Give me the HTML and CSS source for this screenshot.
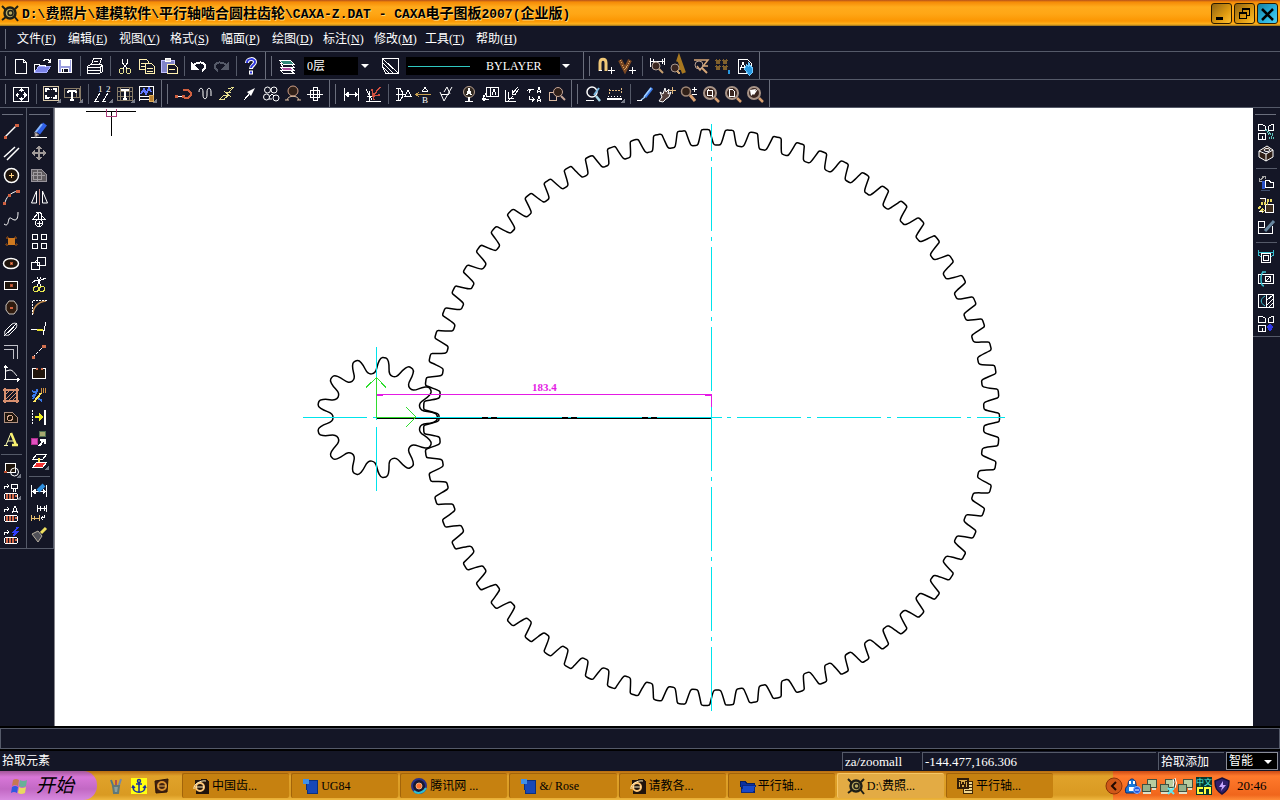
FILE: index.html
```html
<!DOCTYPE html>
<html lang="zh-CN">
<head>
  <meta charset="UTF-8">
  <meta name="viewport" content="width=device-width, initial-scale=1.0">
  <title>CAXA电子图板2007(企业版)</title>
  <link rel="stylesheet" href="styles.css">
</head>
<body>
  <header class="titlebar">
    <span class="app-icon" data-icon="app"></span>
    <h1><span class="latin">D:\</span>费照片<span class="latin">\</span>建模软件<span class="latin">\</span>平行轴啮合圆柱齿轮<span class="latin">\CAXA-Z.DAT - CAXA</span>电子图板<span class="latin">2007(</span>企业版<span class="latin">)</span></h1>
    <div class="window-buttons">
      <button class="win-btn" aria-label="最小化" data-icon="min"></button>
      <button class="win-btn" aria-label="还原" data-icon="restore"></button>
      <button class="win-btn close" aria-label="关闭" data-icon="close"></button>
    </div>
  </header>

  <nav class="menubar">
    <button>文件<span class="key">(<u>F</u>)</span></button>
    <button>编辑<span class="key">(<u>E</u>)</span></button>
    <button>视图<span class="key">(<u>V</u>)</span></button>
    <button>格式<span class="key">(<u>S</u>)</span></button>
    <button>幅面<span class="key">(<u>P</u>)</span></button>
    <button>绘图<span class="key">(<u>D</u>)</span></button>
    <button>标注<span class="key">(<u>N</u>)</span></button>
    <button>修改<span class="key">(<u>M</u>)</span></button>
    <button>工具<span class="key">(<u>T</u>)</span></button>
    <button>帮助<span class="key">(<u>H</u>)</span></button>
  </nav>

  <div class="toolbar-row">
    <div class="band" data-tools="new open save | print | cut copy paste | undo redo | help"></div>
    <div class="band">
      <button class="tool" aria-label="层控制" data-icon="layers"></button>
      <div class="combo layer-combo">
        <select aria-label="当前层"><option>0层</option></select>
      </div>
      <button class="tool" aria-label="颜色" data-icon="color"></button>
      <div class="combo line-combo">
        <select aria-label="线型"><option>BYLAYER</option></select>
      </div>
    </div>
    <div class="band" data-tools="magnet vsnap | qdim qtext qarea qdots qprop"></div>
  </div>

  <div class="toolbar-row">
    <div class="band" data-tools="fit | frame titleblk | number texttable param"></div>
    <div class="band" data-tools="axis wave zigzag arrow contour holeaxis bolt"></div>
    <div class="band" data-tools="dim coord | datum chamferdim rough balloon leader weld section detail"></div>
    <div class="band" data-tools="find measure | redraw pan zoomin zoomwin zoompage zoomback"></div>
  </div>

  <main class="workspace">
    <div class="column" data-tools="line parallel circle arc spline point ellipse rect polygon slot offset formula hatch region text | block lib1 lib2 lib3"></div>
    <div class="column" data-tools="erase move copyobj mirror rotate array scale trim fillet extend stretchline break explode stretch props layerswap | dimedit dimpos brush"></div>
    <div class="canvas">
      <svg class="drawing" viewBox="55 108 1198 618" role="img" aria-label="齿轮啮合图">
        <g class="cursor">
          <path d="M86 111.500H136M111.500 111V136"/>
          <path class="pickbox" d="M106.500 109V116.500H116.500V109"/>
        </g>
        <path class="outline" id="big-gear"/>
        <path class="outline" id="small-gear"/>
        <g class="center-line">
          <path d="M711.500 124V151M711.500 157V161"/>
          <path class="dash-dot" d="M711.500 167V711"/>
          <path d="M711 417.500H722M727 417.500H731"/>
          <path class="dash-dot" d="M737 417.500H1005"/>
          <path d="M303 417.500H367M373 417.500H711M376.500 347V420M376.500 427V491"/>
        </g>
        <path class="axis-line" d="M377 418.500H711M482 417.500H488M491 417.500H497M562 417.500H568M571 417.500H577M642 417.500H648M651 417.500H657"/>
        <g class="dimension">
          <path d="M377 394.500H711M711.500 394V407"/>
          <path class="tip" d="M377 394h6v2h-6zM711 394h-6v2h6z"/>
          <text x="532" y="391">183.4</text>
        </g>
        <path class="ucs" d="M376.500 418V377M366 387.500L376.500 377.500L386 387.500M377 417.500H416M406 407L416 417L406 427"/>
      </svg>
    </div>
    <div class="column right" data-tools="block2 part3d | partout partexp partedit | clamp clamp2 halfsec block3"></div>
  </main>

  <div class="command-line"></div>

  <div class="statusbar">
    <span class="prompt">拾取元素</span>
    <span class="cell command">za/zoomall</span>
    <span class="cell coords">-144.477,166.306</span>
    <span class="cell pick">拾取添加</span>
    <div class="combo snap-combo">
      <select aria-label="捕捉方式"><option>智能</option></select>
    </div>
  </div>

  <footer class="taskbar">
    <button class="start"><span data-icon="windows"></span>开始</button>
    <div class="quick-launch">
      <button aria-label="画笔" data-icon="pens"></button>
      <button aria-label="锚" data-icon="anchor"></button>
      <button aria-label="浏览器" data-icon="browser"></button>
    </div>
    <div class="tasks">
      <button><span data-icon="ie"></span>中国齿...</button>
      <button><span data-icon="ug"></span>UG84</button>
      <button><span data-icon="tencent"></span>腾讯网 ...</button>
      <button><span data-icon="ug"></span>&amp;/ Rose</button>
      <button><span data-icon="ie"></span>请教各...</button>
      <button><span data-icon="folder"></span>平行轴...</button>
      <button class="active"><span data-icon="app"></span>D:\费照...</button>
      <button><span data-icon="word"></span>平行轴...</button>
    </div>
    <div class="tray">
      <button class="expand" aria-label="显示隐藏图标" data-icon="chevron"></button>
      <span data-icon="qq"></span>
      <span data-icon="net"></span>
      <span data-icon="netoff"></span>
      <span data-icon="net"></span>
      <span data-icon="ime"></span>
      <span data-icon="shield"></span>
      <time>20:46</time>
    </div>
  </footer>

  <script src="script.js"></script>
</body>
</html>
```
FILE: styles.css
```css
* {
  box-sizing: border-box;
}

body {
  margin: 0;
  min-height: 100vh;
  display: flex;
  flex-direction: column;
  background: #141626;
  color: #fff;
  font-family: "Liberation Serif", "Noto Sans CJK SC", serif;
  font-size: 12px;
  line-height: 16px;
  overflow: hidden;
}

button,
select {
  font: inherit;
  color: inherit;
  border: 0;
  padding: 0;
  background: none;
}

h1 {
  margin: 0;
}

svg {
  display: block;
}

/* icons */
.icon {
  width: 20px;
  height: 20px;
  fill: none;
  stroke: #fff;
  stroke-width: 1;
  shape-rendering: crispEdges;
  overflow: visible;
}

.icon .soft {
  shape-rendering: auto;
}

.icon text {
  stroke: none;
  fill: #fff;
  font-family: "Liberation Serif", serif;
  font-size: 12px;
}

.icon .small {
  font-size: 9px;
}

.icon .ime {
  fill: #50f0e0;
  font-family: "Noto Sans CJK SC", sans-serif;
  font-size: 8px;
}

/* title bar */
.titlebar {
  display: flex;
  align-items: center;
  height: 26px;
  padding: 0 2px 0 0;
  background: linear-gradient(#b4511c 0, #f58a06 2px, #ffab1c 7px, #ffa615 14px, #fb9602 21px, #ffb21c 24px, #8f6d20 26px);
  color: #000;
}

.app-icon {
  width: 22px;
}

.titlebar h1 {
  flex: 1;
  font-family: "Noto Sans CJK SC", sans-serif;
  font-size: 14px;
  line-height: 20px;
  font-weight: bold;
  white-space: pre;
  text-shadow: 1px 1px #ffd57a;
}

.titlebar .latin {
  font-family: "Liberation Mono", monospace;
  font-size: 13px;
}

.window-buttons {
  display: flex;
  gap: 2px;
}

.win-btn {
  width: 21px;
  height: 21px;
  border: 1px solid #2a1a00;
  border-radius: 3px;
  background: linear-gradient(135deg, #8f6414, #e09a10 60%, #ffc030);
}

.win-btn.close {
  background: linear-gradient(135deg, #157fa0, #2ab4e0 60%, #50d0f0);
}

/* menu */
.menubar {
  display: flex;
  align-items: center;
  height: 26px;
  padding-left: 11px;
  border-bottom: 1px solid #555a69;
}

.menubar::before {
  content: "";
  width: 1px;
  height: 20px;
  margin: 0 -1px 0 -6px;
  background: #6a6e7c;
}

.menubar button {
  width: 51px;
  text-align: left;
}

.menubar button:first-of-type {
  margin-left: 12px;
}

.key {
  font-size: 12px;
}

/* toolbars */
.toolbar-row {
  display: flex;
  height: 28px;
  border-bottom: 1px solid #555a69;
}

.band {
  display: flex;
  align-items: center;
  padding: 0 3px 0 10px;
  border-right: 1px solid #6a6e7c;
  background: linear-gradient(#6a6e7c, #6a6e7c) 5px 4px / 1px 20px no-repeat;
}

.tool {
  width: 22px;
  height: 22px;
  flex: none;
  display: flex;
  align-items: center;
  justify-content: center;
}

.sep {
  width: 1px;
  height: 20px;
  margin: 0 3px 0 4px;
  background: #555a69;
}

.combo {
  position: relative;
  height: 18px;
  background: #000;
}

.combo select {
  appearance: none;
  width: 100%;
  height: 18px;
  padding-left: 3px;
  line-height: 18px;
}

.combo::after {
  content: "";
  position: absolute;
  right: 5px;
  top: 7px;
  border: 4px solid transparent;
  border-top-color: #fff;
  border-bottom: 0;
  pointer-events: none;
}

.layer-combo {
  width: 70px;
  margin: 0 6px;
  background: linear-gradient(90deg, #000 54px, #141626 54px);
}

.line-combo {
  width: 169px;
  margin: 0 5px 0 4px;
  background: linear-gradient(#30c8c0, #30c8c0) 2px 9px / 62px 1px no-repeat, linear-gradient(90deg, #000 154px, #141626 154px);
}

.line-combo select {
  padding-left: 80px;
}

/* drawing area */
.workspace {
  flex: 1;
  min-height: 0;
  display: flex;
}

.column {
  width: 27px;
  align-self: flex-start;
  display: flex;
  flex-direction: column;
  align-items: center;
  padding: 12px 4px 2px 0;
  border-right: 1px solid #555a69;
  border-bottom: 1px solid #555a69;
  background: linear-gradient(#6a6e7c, #6a6e7c) 2px 6px / 21px 1px no-repeat;
}

.column + .column {
  padding-left: 1px;
  padding-right: 3px;
}

.column.right {
  padding: 12px 1px 2px 0;
  border-right: 0;
}

.column .sep {
  width: 21px;
  height: 1px;
  margin: 4px 0 3px;
}

.canvas {
  flex: 1;
  align-self: stretch;
  min-width: 0;
  border-left: 1px solid #85858c;
  background: #fff;
}

.drawing {
  width: 100%;
  height: 100%;
  fill: none;
  stroke-width: 1;
  shape-rendering: crispEdges;
}

.cursor {
  stroke: #000;
}

.pickbox {
  stroke: #a83c78;
}

.outline {
  stroke: #000;
  stroke-width: 1.5px;
  shape-rendering: auto;
}

.center-line {
  stroke: #00e4ec;
  shape-rendering: auto;
}

.dash-dot {
  stroke-dasharray: 64 6 4 6;
}

.axis-line {
  stroke: #000;
}

.dimension {
  stroke: #e41ae4;
}

.dimension .tip {
  fill: #e41ae4;
  stroke: none;
}

.dimension text {
  fill: #e41ae4;
  stroke: none;
  font-size: 11px;
  font-weight: bold;
}

.ucs {
  stroke: #2fdc2f;
}

/* command and status */
.command-line {
  height: 25px;
  border-top: 2px solid #000;
  border-bottom: 2px solid #000;
  box-shadow: inset 0 0 0 1px #555a69;
}

.statusbar {
  display: flex;
  align-items: center;
  gap: 2px;
  height: 20px;
}

.prompt {
  flex: 1;
  padding-left: 2px;
}

.cell {
  height: 18px;
  padding-left: 2px;
  line-height: 18px;
  border-top: 1px solid #555a69;
  border-left: 1px solid #555a69;
}

.command {
  width: 78px;
  font-size: 13px;
}

.coords {
  width: 234px;
  font-size: 13px;
}

.pick {
  width: 66px;
}

.snap-combo {
  width: 52px;
  margin-right: 2px;
  border: 1px solid #8a8d98;
}

.snap-combo select {
  height: 16px;
  line-height: 16px;
  padding-left: 2px;
}

/* taskbar */
.taskbar {
  display: flex;
  align-items: stretch;
  height: 29px;
  background: linear-gradient(#b86c10, #e0a22a 5px, #d99a22 24px, #efb840);
  color: #000;
}

.start {
  width: 97px;
  display: flex;
  align-items: center;
  gap: 7px;
  padding-left: 9px;
  border-radius: 0 14px 14px 0;
  background: linear-gradient(#a4569a, #d877d8 6px, #c268c4 18px, #d88adf);
  font-size: 19px;
  font-style: italic;
}

.quick-launch {
  display: flex;
  align-items: center;
  gap: 3px;
  width: 85px;
  padding-left: 9px;
}

.tasks {
  flex: 1;
  display: flex;
  gap: 2px;
  padding: 2px 60px 2px 0;
}

.tasks button {
  flex: 1;
  display: flex;
  align-items: center;
  gap: 1px;
  padding-left: 8px;
  background: #c68110;
  border-top: 1px solid #a2640a;
  border-left: 1px solid #a2640a;
  border-radius: 2px;
}

.tasks .active {
  background: #e3ab44;
  border-color: #f6c766;
}

.tray {
  display: flex;
  align-items: center;
  width: 167px;
  background: linear-gradient(#cc4a14, #ff7a2c 5px, #f0661c 24px, #ff8c38);
}

.expand {
  width: 18px;
  margin-left: -9px;
}

.tray span {
  width: 18px;
}

.tray time {
  margin-left: 7px;
  font-size: 13px;
  white-space: nowrap;
}
```
FILE: script.js
```js
// Icon shapes, drawn on a 20x20 grid
const corner = '<path fill="#777b88" stroke="none" d="M20 14v5h-5z"/>';
const lens = '<g class="soft"><circle cx="9" cy="9" r="6" fill="#3a2620" stroke="#a89488" stroke-width="2"/><path stroke="#d8a070" stroke-width="2.500" d="M14 14l4 4"/></g>';
const bits = '<path d="M2.500 3.500h4l3 2v4h-7zM12.500 9.500v-4l3 -2h2v6zM2.500 12.500h7v6h-7zM6 15v3"/>';
const plate = '<rect x="3.500" y="12.500" width="13" height="6" rx="2"/><path stroke="#d2694a" stroke-width="2" d="M6 13v5M9 13v5M12 13v5M14 15h2"/>';
const screens = '<path fill="#b8cda0" stroke="#405040" d="M7.500 3.500h9v8h-9z"/><path fill="#96b08a" stroke="#405040" d="M2.500 8.500h8v7h-8z"/><path stroke="#e0e0c8" stroke-width="2" d="M3 17h8M12 13h4"/>';

const icons = {
  new: '<path d="M4.500 3.500h8l3 3v11h-11zM12.500 3.500v3h3"/>',
  open: '<path fill="#7c84e8" stroke="#aab0ff" d="M5.500 10.500h12l-4 6h-12z"/><path d="M1.500 16v-8h4l1 1h6v2M10 5l3 -2h2l2 3M17.500 3v3h-3"/>',
  save: '<path fill="#9a9ee0" d="M3.500 3.500h13v13h-13z"/><path fill="#fff" d="M6 4h8v5h-8z"/><path fill="#141626" d="M6.500 12.500h7v4h-7z"/><path stroke="#fff" d="M8.500 13v3M7 6h6"/>',
  print: '<path fill="#141626" d="M6.500 8.500l2 -6h8l-2 6zM2.500 10.500l3 -2h11l1 2v5l-3 2h-12zM3 11.500h12M3 14.500h12M15.500 16v-5l2 -2M9 5.500h4"/>',
  cut: '<path d="M7.500 3v4l5 6M12.500 3v4l-5 6"/><circle cx="6.500" cy="15" r="2.500" stroke="#e5e090"/><circle cx="13.500" cy="15" r="2.500" stroke="#e5e090"/>',
  copy: '<path fill="#141626" stroke="#fff0b0" d="M2.500 3.500h7l2 2v8h-9zM4 7.500h5M4 10.500h5"/><path fill="#141626" stroke="#fff0b0" d="M8.500 7.500h6l3 3v7h-9zM10 12.500h6M10 15.500h6"/>',
  paste: '<path fill="#8084c8" stroke="#c0c0ff" d="M2.500 4.500h13v12h-13z"/><path fill="#ddd" d="M6.500 2.500h5v3h-5z"/><path fill="#141626" stroke="#fff0b0" d="M8.500 8.500h7l3 3v6h-10zM10 13.500h6"/>',
  undo: '<path stroke-width="2" d="M4 11c2 -5 12 -7 12 0c0 2 -1 3 -3 4"/><path fill="#fff" d="M2.500 6.500v7h7z"/>',
  redo: '<g stroke="#555a69"><path stroke-width="2" d="M16 11c-2 -5 -12 -7 -12 0c0 2 1 3 3 4"/><path fill="#555a69" d="M17.500 6.500v7h-7z"/></g>',
  help: '<g class="soft"><path stroke-width="4" d="M6 7c0 -5 8 -5 8 -1c0 3 -4 3 -4 7M10 14.500v4"/><path stroke="#3038e0" stroke-width="2" d="M6 7c0 -5 8 -5 8 -1c0 3 -4 3 -4 6M10 15.500v2"/></g>',
  layers: '<path fill="#141626" d="M3.500 14.500h10l4 3h-11z"/><path fill="#b050a0" d="M3.500 11.500h10l4 3h-11z"/><path fill="#141626" d="M3.500 7.500h10l4 4h-11z"/><path fill="#308878" d="M2.500 4.500h11l4 4h-11z"/>',
  color: '<path d="M1.500 2.500h16v15zM1.500 2.500v4l11 11h5M1.500 6.500v4l7 7h4M1.500 10.500l3 7h4"/>',
  magnet: '<path class="soft" stroke="#f0c878" stroke-width="3" d="M5 15V7c0 -5 6 -5 6 0v8"/><path d="M4 14.500h3M13 14.500h7M16.500 11v7"/>',
  vsnap: '<path class="soft" stroke="#7a4824" stroke-width="4" d="M3 4l5 10l5 -10"/><path stroke="#d8a060" stroke-dasharray="1 1" d="M3 4l5 10l5 -10"/><path d="M12 14.500h7M15.500 11v7"/>',
  qdim: '<path d="M3.500 2v9M17.500 2v7M4 5.500h13M6 3v5M15 3v5"/><g class="soft"><circle cx="9" cy="10" r="4" fill="#3a2620" stroke="#b8a8a0"/><path stroke="#c8a070" stroke-width="2" d="M12 13l4 4"/></g>',
  qtext: '<path class="soft" stroke="#a87820" stroke-width="4" d="M9 6l1 -3l5 14M8 12h6"/><circle class="soft" cx="6" cy="12" r="4" fill="#3a2620" stroke="#a89890"/><path stroke="#c8a070" stroke-width="2" d="M8 15l3 3"/>',
  qarea: '<g class="soft"><path stroke="#d8a878" stroke-width="1.500" d="M3 4h14l-8 10l-3 -4M11 10h6"/><circle cx="8" cy="9" r="4" stroke="#b8a090"/><path stroke="#d8a878" stroke-width="2" d="M11 12l5 5"/></g>',
  qdots: '<path stroke="#80602c" stroke-width="2" d="M3 4l4 4M7 4l-4 4M10 4l4 4M14 4l-4 4M3 10l4 4M7 10l-4 4M10 10l4 4M14 10l-4 4"/><path stroke="#2898e0" stroke-width="2" d="M16 14v4"/>',
  qprop: '<path d="M3.500 3.500h9l4 4v10h-13z"/><path d="M5 14l3 -8l3 8M6 11h4"/><path fill="#2898e0" stroke="#70c8ff" d="M9.500 13.500l2 -5l2 2v-4l2 4l2 1v5l-3 3z"/>',
  fit: '<path d="M2.500 3.500h15v14h-15z"/><path d="M10 5v3M10 13v3M5 10.500h3M12 10.500h3"/><path fill="#fff" stroke="none" d="M7 7l3 -3l3 3zM7 14l3 3l3 -3zM7 8l-3 3l3 3zM13 8l3 3l-3 3z"/>',
  frame: '<path stroke="#d8c8a8" d="M2.500 2.500h15v14h-15z"/><path stroke-width="2" d="M8 5h-3v3M12 5h3v3M15 11v3h-3M8 14h-3v-3"/><path stroke-dasharray="1 1" d="M8 5.500h4M8 13.500h4"/>' + corner,
  titleblk: '<path stroke="#887c68" d="M1.500 4.500h15v9h-15zM13.500 4v9M17.500 2v15"/><path stroke-width="2" d="M5 7h8M9 7v9M7 16h4M5 7v2M13 7v2"/>' + corner,
  number: '<text class="small" x="5" y="8">1</text><text class="small" x="13" y="8">2</text><path d="M2 17l5 -8M10 17l5 -8M1 17.500h5M9 17.500h4"/>' + corner,
  texttable: '<path stroke="#887c68" d="M2.500 3.500h15v13h-15zM2 7.500h15M2 12.500h15M5.500 3v13M14.500 3v13"/><path stroke-width="2" d="M6 6h8M10 6v9M8 15h4"/>' + corner,
  param: '<path d="M2.500 2.500h14v10h-14zM2 15.500h11M2.500 12v5M16.500 9v-7"/><path stroke="#6078ff" stroke-width="2" d="M4 10l3 -5l2 5l3 -6l2 4"/><path fill="#b88030" stroke="#e0b060" d="M12.500 11.500h4v6h-4z"/>' + corner,
  axis: '<path d="M3 12.500h9"/><path stroke="#d06040" stroke-width="1.500" d="M10 6h5l3 3v2l-3 3h-4"/><path stroke="#d06040" stroke-width="3" d="M2 12.500h3M9 12.500h3"/>',
  wave: '<path class="soft" d="M4 8c0 -5 4 -5 4 0v3c0 5 4 5 4 0V8c0 -5 4 -5 4 0v4"/>',
  zigzag: '<path stroke="#e8e090" d="M2 16l5 -5M2 16l6 -1M7 11l6 1l-5 -4l6 1M12 8l5 -5l-6 2M7 15l4 -3"/>',
  arrow: '<path d="M5 16l7 -8"/><path class="soft" fill="#fff" stroke="none" d="M8 8l8 -4l-4 8z"/>',
  contour: '<g class="soft"><circle cx="6.500" cy="6" r="3"/><circle cx="13" cy="6" r="3"/><circle cx="5.500" cy="13" r="3"/><circle cx="15" cy="14" r="3"/><path d="M8 13l3 -3l2 2M8 15h3"/></g>',
  holeaxis: '<g class="soft"><circle cx="10" cy="7" r="5" fill="#302018" stroke="#d0a088"/><path stroke="#e0c0a0" d="M4 16c1 -5 11 -5 12 0M2 16h4M14 16h4"/></g>',
  bolt: '<path d="M2 10.500h16M5.500 6.500h9v7h-9zM8.500 3.500h4v13h-4z"/>',
  dim: '<path d="M3.500 4v13M17.500 4v13M4 10.500h13"/><path fill="#fff" d="M4 10.500l3 -2v4zM17 10.500l-3 -2v4z"/>',
  coord: '<path d="M3 5l6 11M3 17.500h15M6.500 7v10M4 12h5"/><path stroke="#d05040" stroke-width="1.500" d="M17 3l-7 9l7 -1M9 5l2 11"/>',
  datum: '<path d="M3 4.500h4l2 3v6l-2 3h-4M3 10.500h9M5.500 4v12M12 12l3 -6l3 6zM11 12.500h8"/>',
  chamferdim: '<path stroke="#c8a050" d="M1 10.500h15M4 8l-3 2.500l3 2.500"/><path d="M7 8l3 -5l3 5M8 7h4"/><text x="7" y="19" class="small">B</text>',
  rough: '<path class="soft" d="M3 8l4 9l8 -14M4 10.500h8M7 8l3 -5l3 7"/>',
  balloon: '<circle class="soft" cx="10" cy="8" r="5.500" fill="#302820" stroke="#b8a090"/><path stroke-width="1.500" d="M8 11l2 -6l2 6M8 9h4M10 13v4M6 17.500h8"/>',
  leader: '<path d="M5.500 3.500h12v9h-12zM9.500 3.500v9M11 11l2 -6l2 6M5 9l-3 6h6M2 15v-4"/><path fill="#fff" d="M1 14h4l-2 3z"/>',
  weld: '<path d="M2.500 6v11h10M5.500 8v6h5M5 17l5 -5M15 3l-6 7M9 6v4h4M16 5l-4 5"/>',
  section: '<path d="M4 5.500h5M4 5v4M2 7l2 -2l2 2M4 15.500h5M4 12v4M7 13l2 2.500l-2 2M12 9l2 -6l2 6M13 7h3M12 18l2 -6l2 6M13 16h3"/>',
  detail: '<path stroke="#d8b8a0" d="M2.500 8.500h7v8h-7z"/><g class="soft"><circle cx="11" cy="8" r="4.500" fill="#302018" stroke="#c8a898"/><path stroke="#c8a898" stroke-width="2" d="M14 12l4 4"/></g>',
  find: '<g class="soft"><circle cx="9" cy="8" r="5" stroke-width="1.500"/><path stroke-width="2.500" stroke="#a8d8e8" d="M13 12l4 5"/><path stroke="#7ab8e0" stroke-width="2" d="M11 11l5 -7"/></g><path d="M3 16.500h8"/>',
  measure: '<path stroke="#e0b880" stroke-dasharray="2 1" d="M4 6.500h12M4 4.500v5M16.500 4v5"/><path stroke-width="2" d="M2 15h15"/><path stroke-dasharray="1 2" d="M3 12.500h14"/>' + corner,
  redraw: '<g class="soft"><path stroke="#3878e8" stroke-width="3" d="M17 4l-7 9"/><path stroke="#a0d0ff" stroke-width="1.500" d="M10 13l-4 3M16 4l-7 9"/></g><path d="M2 16.500h5"/>',
  pan: '<path class="soft" fill="#54403c" d="M2 17l3 -4l-2 -5l3 2l2 -6l1 4l3 -3l-1 5l3 -2l-2 5l-3 2l-3 3z"/><path stroke="#e0b880" d="M15.500 3v7M12 6.500h7"/>',
  zoomin: '<g class="soft"><circle cx="7" cy="7.500" r="4.500" fill="#302018" stroke="#a08878" stroke-width="1.500"/><path stroke="#d8a070" stroke-width="3" d="M11 11l5 6"/></g><path d="M15.500 3v5M13 5.500h5M13 10.500h5"/>',
  zoomwin: lens + '<path d="M6.500 6.500h5v5h-5zM7.500 5v2M11.500 10v3"/>',
  zoompage: lens + '<path d="M6.500 5.500h3l2 2v5h-5z"/>',
  zoomback: lens + '<path class="soft" fill="#fff" stroke="none" d="M5 6l6 -1l-1 2l3 -2l-4 6l-1 -1l-2 2z"/>',

  line: '<path class="soft" stroke-width="1.500" d="M4 16l12 -12"/><path stroke="#d06040" stroke-width="3" d="M3 16h3M14 4.500h4"/>',
  parallel: '<g class="soft" stroke-width="1.500"><path d="M3 14l11 -10M6 17l12 -12"/></g>',
  circle: '<g class="soft"><circle cx="10.500" cy="10.500" r="7" fill="#20150c" stroke-width="1.500"/><path stroke="#ffd080" d="M8 10.500h5M10.500 8v5"/></g>',
  arc: '<path class="soft" d="M4 17c0 -6 6 -12 13 -13"/><path stroke="#d06040" stroke-width="3" d="M2 16.500h3M7 8.500h3M15 4h4"/>',
  spline: '<path class="soft" d="M3 15c4 3 4 -2 5 -5s3 1 6 1s3 -6 3 -8"/>',
  point: '<path fill="#d07a20" stroke="none" d="M7 7h7v7h-7z"/><path stroke="#6a3a18" stroke-width="2" d="M7 6l-2 2M14 6l2 2M7 15l-2 -2M14 15l2 -2"/>',
  ellipse: '<ellipse class="soft" cx="10" cy="10.500" rx="7.500" ry="5" fill="#20150c" stroke-width="1.500"/><path fill="#e0a060" stroke="#b05030" d="M9 9h2v2h-2z"/>',
  rect: '<path fill="#20150c" d="M3.500 6.500h13v8h-13z"/><path fill="#e06040" stroke="#b05030" d="M9 9h2v2h-2z"/>',
  polygon: '<path class="soft" fill="#301c10" stroke="#c8c0b8" d="M8 4h5l3 4v5l-3 4h-5l-3 -4v-5z"/><path stroke="#d06040" stroke-width="2" d="M9 10.500h3"/>',
  slot: '<path class="soft" d="M4 12l7 -7c4 -2 6 0 4 4l-7 7c-4 1 -5 0 -4 -4zM3 17l13 -13M7 14l6 -6"/>',
  offset: '<path stroke="#c0c0c8" d="M3 4.500h13.500v13M3 8.500h9.500v9"/>',
  formula: '<path d="M4.500 3v14M3 16.500h15M3 5l1.500 -2l2 2M16 15l2 1.500l-2 2"/><path class="soft" d="M5 8l4 -1c3 0 5 4 7 6"/>',
  hatch: '<path fill="#3c2418" stroke="#d89070" stroke-width="2" d="M4 3v15M16 3v15M2 5h16M2 16h16"/><path stroke="#d89070" d="M5 9l4 -4M5 14l9 -9M8 15l7 -7M12 15l4 -4"/>',
  region: '<path stroke="#b09080" fill="#20150c" d="M3.500 5.500h8l5 5v5h-13z"/><circle cx="9" cy="11" r="2.500" stroke="#d8a890"/>',
  text: '<path class="soft" stroke="#ffffb0" stroke-width="1" d="M5 16l5 -12M7 12h5M3 16.500h4"/><path class="soft" stroke="#f8f070" stroke-width="2.500" d="M10 4l5 12M11 16h6"/>',
  block: '<path fill="#20150c" d="M4.500 4.500h10v9h-10z"/><circle cx="13.500" cy="13" r="4" class="soft"/><path stroke="#c05030" stroke-width="2" d="M3 13h3"/>' + corner,
  lib1: '<path d="M3 8v-3h5M6 3l2 2l-2 2M10.500 3.500h6v4h-6zM12.500 7v4M14.500 7v4"/>' + plate + corner,
  lib2: '<path d="M3 9v-3h5M6 4l2 2l-2 2M11 10l3 -7l3 7M12 8h4"/>' + plate,
  lib3: '<path d="M3 10v-3h5M6 5l2 2l-2 2"/><path stroke="#3040ff" stroke-width="2" d="M17 2l-4 5h3l-4 4"/>' + plate,
  erase: '<path d="M2 16.500h16"/><path class="soft" stroke="#3060e8" stroke-width="5" d="M16 3l-7 9"/><path class="soft" stroke="#88b8ff" stroke-width="2" d="M13 3l-7 9"/><path class="soft" fill="#d8c8c0" stroke="#706870" d="M6 11l4 3l-4 2z"/>',
  move: '<path class="soft" stroke="#a09a98" stroke-width="2" d="M10 4v12M4 10h12"/><path fill="#a09a98" stroke="none" d="M7 6l3 -4l3 4zM7 14l3 4l3 -4zM6 7l-4 3l4 3zM14 7l4 3l-4 3z"/>',
  copyobj: '<path fill="#605c60" stroke="#98949c" d="M2.500 4.500h10l5 5v7h-15z"/><path stroke="#a09ca0" d="M4.500 7.500h8v7h-8zM8.500 5v11M3 10.500h13"/>',
  mirror: '<path class="soft" d="M7.500 4v12h-5zM13.500 4v12h5z"/><path stroke="#c89088" d="M10.500 2v16"/>',
  rotate: '<path d="M9 4v6h-5zM12 6v4h4zM7 3.500h4l2 2"/><circle cx="10" cy="14" r="3.500"/><path d="M8 14.500h5M10.500 12v5"/>',
  array: '<path d="M3.500 3.500h5v5h-5zM12.500 3.500h5v5h-5zM3.500 12.500h5v5h-5zM12.500 12.500h5v5h-5z"/>',
  scale: '<path d="M8.500 4.500h8v8h-8zM2.500 9.500h8v7h-8zM8 7l-3 3"/>',
  trim: '<path d="M3 8l4 -3h5l5 -2M8 2l4 9M12 2l-4 9"/><circle cx="7" cy="14" r="2.500" stroke="#e8e850"/><circle cx="13" cy="14" r="2.500" stroke="#e8e850"/>',
  fillet: '<path class="soft" stroke="#c89050" stroke-width="1.500" d="M4 17c0 -7 5 -12 13 -13"/><path stroke="#fff" stroke-dasharray="2 1" d="M3.500 18v-14.500h14"/>',
  extend: '<path d="M2 10.500h8M17 3l-3 13"/><path stroke="#e8e030" stroke-width="2" d="M8 10.500h6"/>',
  stretchline: '<path stroke-dasharray="3 1" d="M4 16l12 -12"/><path stroke="#d07050" stroke-width="3" d="M3 16h3M13 5h4"/>',
  break: '<path fill="#20150c" d="M7 5.500h-3.500v10h13v-10h-4"/><path stroke="#d07050" stroke-width="2" d="M7 6h2M12 6h2"/>',
  explode: '<path stroke="#3878e8" stroke-width="2" d="M3 6l4 2M8 4l-1 5M3 11l4 -2M9 13l4 3M4 14l2 -4"/><path stroke="#ffe860" stroke-width="2" d="M5 17l7 -9"/><path stroke="#d09040" stroke-dasharray="1 1" stroke-width="5" d="M12 5h6"/>',
  stretch: '<path stroke-dasharray="2 1" d="M3.500 3v15"/><path stroke-width="2" d="M16 3v15"/><path stroke="#f0f020" stroke-width="2" d="M6 10h6"/><path fill="#f0f020" stroke="none" d="M10 6l4 4l-4 4z"/>',
  props: '<path fill="#a8a870" stroke="#507050" d="M10.500 2.500h6v5h-6z"/><path fill="#e050c0" stroke="#b03090" d="M2.500 9.500h6v6h-6z"/><path stroke-width="2" d="M10 17l5 -6M11 11h5v4"/>',
  layerswap: '<path d="M3.500 8.500l4 -5h10l-4 5z"/><path fill="#f03030" d="M3.500 16.500l4 -5h10l-4 5z"/><path stroke="#ffe860" stroke-width="2" d="M10 7v4"/>' + corner,
  dimedit: '<path d="M2.500 4v12M17.500 4v12M3 10.500h14"/><path fill="#fff" d="M3 10.500l3 -2v4zM17 10.500l-3 -2v4z"/><path class="soft" stroke="#3090e0" stroke-width="4" d="M15 4l-6 6"/>',
  dimpos: '<path d="M8.500 2v7M17.500 2v7M9 5.500h8M11 3v5M15 3v5M16 12c0 2 -1 3 -3 3M14 13l-2 2l2 2"/><path stroke="#e8c070" d="M2.500 12v6M10.500 12v6M3 15.500h7M5 13v4"/>',
  brush: '<path class="soft" fill="#505058" stroke="#b8b0a0" d="M3 9l6 -3l4 5l-4 6z"/><path class="soft" stroke="#f0e060" stroke-width="3" d="M12 8l5 -5"/>',
  block2: bits + '<path stroke="#60c0b8" stroke-dasharray="1 1" stroke-width="2" d="M10 9l8 8M12 13h6M13 17h5"/>',
  block3: bits + '<path fill="#3038e8" stroke="#3038e8" d="M11 14l3 -3l3 3l-3 4z"/>',
  part3d: '<path class="soft" fill="#302018" d="M3 8l8 -5l6 4v7l-7 4l-7 -4zM3 8l7 3l7 -4M10 11v7"/><ellipse class="soft" cx="11" cy="7" rx="3" ry="1.500"/>',
  partout: '<path stroke="#a8a8a8" d="M3 8l6 -5M6 3h3v3M3 5v3h3"/><path stroke="#2850c8" stroke-width="3" d="M7 8v8"/><path d="M9.500 7.500h4l1 2h3v5h-8z"/><path stroke="#405070" d="M5 17.500h9"/>',
  partexp: '<path fill="#403020" d="M3.500 3.500h6v6M9.500 9.500h8v8h-8z"/><path stroke="#e8d860" stroke-width="3" stroke-dasharray="2 1" d="M11 5h6M3 12l5 5M5 8h7"/><path d="M3 16h4"/>',
  partedit: '<path d="M2.500 4.500h6v6h-6zM2.500 10.500v6h14v-8"/><path class="soft" stroke="#6888a0" stroke-width="3" d="M18 4l-9 10"/>',
  clamp: '<path stroke="#38c0d0" d="M2.500 3v5l3 2M17.500 3v5l-3 2M3 5.500h14"/><path d="M5.500 6.500h9v9h-9z"/><circle cx="10" cy="11" r="3"/>',
  clamp2: '<path d="M2.500 5.500h15v9h-15z"/><circle cx="12" cy="10" r="3"/><path d="M10 12l4 -4"/><path class="soft" stroke="#38c0d0" stroke-width="1.500" d="M8 3c-4 0 -4 14 0 14M6 3h4"/>',
  halfsec: '<path d="M2.500 3.500h15v13h-15zM10.500 3v14M11 9l6 -5M11 14l6 -6M13 16l4 -4"/><path class="soft" stroke="#38c0d0" d="M9 5c-5 3 -5 7 0 10"/>',

  app: '<g class="soft" stroke="#1e1e16"><circle cx="10" cy="10" r="5.500" stroke-width="2.500" fill="#b8a860"/><path stroke-width="2" d="M2 3l4 4M18 3l-3 3M2 17l4 -3M14 13l4 5"/><circle cx="10.500" cy="10" r="2.500" stroke-width="1.500"/></g>',
  min: '<path stroke="#000" stroke-width="3" d="M4 14.500h7"/>',
  restore: '<g stroke="#000"><path d="M7.500 8V4.500h7v7H12M7 5.500h8"/><path d="M4.500 8.500h7v6h-7zM4 9.500h8"/></g>',
  close: '<path class="soft" stroke="#000" stroke-width="2.500" d="M4 5l11 11M15 5L4 16"/>',
  windows: '<g class="soft" stroke="none"><path fill="#c87850" d="M4 4q3 -2 6 0l-1 6q-3 -2 -6 0z"/><path fill="#68b098" d="M11 4q3 2 7 0l-1 6q-4 2 -7 0z"/><path fill="#3058e0" d="M3 11q3 -2 6 0l-1 6q-3 -2 -6 0z"/><path fill="#e8d860" d="M10 11q3 2 7 0l-1 6q-4 2 -7 0z"/></g>',
  pens: '<g class="soft" stroke-width="2"><path stroke="#507888" d="M5 4l3 8"/><path stroke="#b05050" d="M10 4v8"/><path stroke="#7088b0" d="M15 3l-3 9"/><path fill="#8aa0a0" stroke="#607878" d="M7 10h6l-1 7h-4z"/></g>',
  anchor: '<path fill="#ffff10" stroke="none" d="M2 2h16v16h-16z"/><g class="soft" stroke="#1830a0" stroke-width="1.500"><circle cx="10" cy="5" r="1.500"/><path d="M10 7v9M7 8h6M4 11c0 7 12 7 12 0M3 12l1 -2l2 2M14 12l2 -2l1 2"/></g>',
  browser: '<g class="soft"><path fill="#402010" stroke="#2a1408" d="M3 5l13 -2l-1 13l-11 1z"/><circle cx="10" cy="10" r="4" stroke="#d89030" stroke-width="2"/><path stroke="#e8b050" d="M6 10h8"/></g>',
  ie: '<path fill="#20140c" stroke="none" d="M4 4l11 -1l3 3v12h-13z"/><g class="soft"><circle cx="9" cy="11" r="4" stroke="#ffc878" stroke-width="2"/><path stroke="#fff0c0" d="M5 11h8M3 13c-1 -5 7 -9 12 -8"/></g>',
  ug: '<path fill="#1848b8" stroke="#0a3080" d="M5.500 4.500h12v13h-10z"/><path fill="#4090e8" stroke="none" d="M3 3h6v5h-6z"/>',
  tencent: '<g class="soft"><circle cx="10" cy="10" r="7" fill="#181830" stroke="#283088" stroke-width="2"/><path stroke="#30c0d0" stroke-width="2" d="M5 15c4 4 10 1 12 -3"/><circle cx="10" cy="10" r="3" fill="#ff7030" stroke="#f0b080"/></g>',
  folder: '<path fill="#0c30a0" stroke="#082060" d="M3.500 5.500h5l1 2h8v9h-13z"/><path fill="#1848c8" stroke="#0c2880" d="M5.500 9.500h13l-2 7h-12z"/>',
  word: '<path fill="#f0d890" stroke="#402808" d="M8.500 5.500h9v12h-9z"/><path stroke="#402808" d="M14 8.500h3M14 11.500h3M10 14.500h7"/><path fill="#d8a848" stroke="#301c08" stroke-width="1.500" d="M3 3h10v9h-10z"/><path stroke="#301c08" stroke-width="1.500" d="M5 5l1 5l2 -3l2 3l1 -5"/>',
  chevron: '<g class="soft"><circle cx="10" cy="10" r="8" fill="#d05818" stroke="#8c3408"/><path stroke="#200800" stroke-width="2" d="M12 6l-4 4l4 4"/></g>',
  qq: '<g class="soft"><path fill="#1878d8" stroke="#0c2870" d="M4 17c-2 -5 1 -6 2 -8c0 -8 8 -8 8 0c1 3 4 4 3 8z"/><path fill="#fff" stroke="none" d="M7 5h2v3h-2zM11 5h2v3h-2zM7 11h5v4h-5z"/><circle cx="15" cy="14" r="3.500" fill="#2058e0" stroke="#90b8ff"/><path d="M13 14h4"/></g>',
  net: screens,
  netoff: screens + '<path class="soft" stroke="#60e8f0" stroke-width="2" d="M10 12l6 6M16 12l-6 6"/><path class="soft" d="M15 3q2 3 0 7M17 2q3 5 0 10"/>',
  ime: '<path fill="#083830" stroke="none" d="M2 1h16v18h-16z"/><text x="2" y="9" class="ime">中文</text><path stroke="#ffff40" stroke-width="2" d="M9 12h-5v5h5M11 18v-6h5v6"/>',
  shield: '<g class="soft"><path fill="#30206c" stroke="#18103c" stroke-width="1.500" d="M10 2l7 3c0 7 -2 10 -7 13c-5 -3 -7 -6 -7 -13z"/><path fill="#c8a8ff" stroke="none" d="M11 5l-4 6h3l-1 4l5 -6h-3z"/></g>'
};

function iconSvg(name) {
  return `<svg class="icon" viewBox="0 0 20 20" aria-hidden="true">${icons[name]}</svg>`;
}

// Fill the toolbars, "|" is a separator
document.querySelectorAll('[data-tools]').forEach(bar => {
  bar.dataset.tools.split(' ').forEach(name => {
    if (name === '|') {
      bar.insertAdjacentHTML('beforeend', '<span class="sep"></span>');
    } else {
      bar.insertAdjacentHTML('beforeend', `<button class="tool" aria-label="${name}">${iconSvg(name)}</button>`);
    }
  });
});

document.querySelectorAll('[data-icon]').forEach(el => {
  el.innerHTML = iconSvg(el.dataset.icon);
});

// Gear outline: profile is [share of the pitch, radius] from the gap to the gap
function gearPath(cx, cy, teeth, profile) {
  const pitch = 2 * Math.PI / teeth;
  const points = [];
  for (let i = 0; i < teeth; i++) {
    profile.forEach(([share, r]) => {
      const a = (i + share) * pitch;
      points.push([cx + r * Math.cos(a), cy - r * Math.sin(a)]);
    });
  }
  const mid = (p, q) => `${((p[0] + q[0]) / 2).toFixed(2)} ${((p[1] + q[1]) / 2).toFixed(2)}`;
  let d = 'M' + mid(points[points.length - 1], points[0]);
  points.forEach((p, i) => {
    d += `Q${p[0].toFixed(2)} ${p[1].toFixed(2)} ${mid(p, points[(i + 1) % points.length])}`;
  });
  return d + 'Z';
}

document.getElementById('big-gear').setAttribute('d', gearPath(711.5, 417.5, 75, [
  [-0.37, 272.5], [-0.31, 275], [-0.2, 285], [-0.17, 288], [0, 288],
  [0.17, 288], [0.2, 285], [0.31, 275], [0.37, 272.5], [0.5, 272.5]
]));
document.getElementById('small-gear').setAttribute('d', gearPath(377, 417.5, 13, [
  [-0.4, 44], [-0.28, 47], [-0.22, 54], [-0.12, 60], [0, 60.5],
  [0.12, 60], [0.22, 54], [0.28, 47], [0.4, 44]
]));
```
